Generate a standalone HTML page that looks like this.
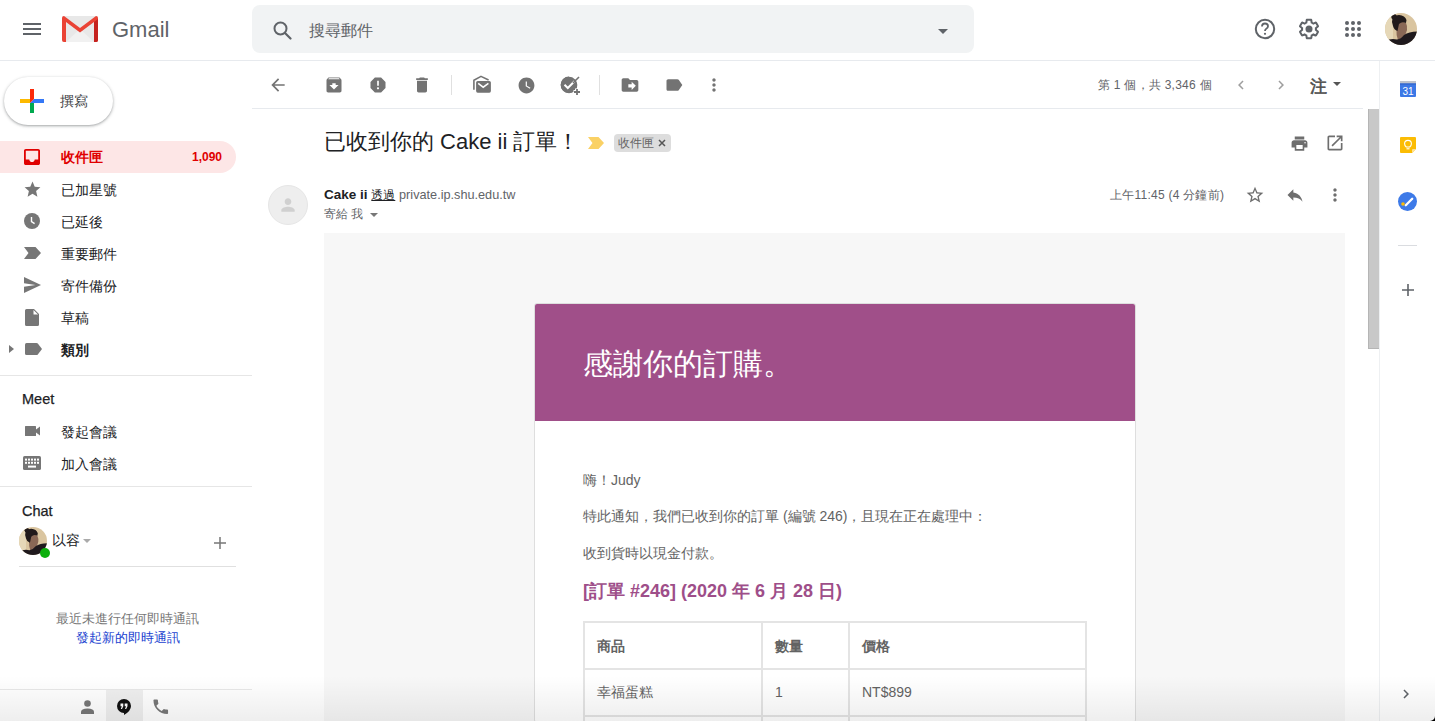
<!DOCTYPE html>
<html><head><meta charset="utf-8">
<style>
*{box-sizing:border-box;margin:0;padding:0}
html,body{width:1435px;height:721px;overflow:hidden;background:#fff}
body{font-family:"Liberation Sans",sans-serif;color:#202124;position:relative}
.a{position:absolute}
.t{position:absolute;white-space:nowrap;line-height:1}
svg{position:absolute;display:block}
.hl{position:absolute;height:1px;background:#e8eaed}
.ic{fill:#767676}
</style></head><body>

<!-- HEADER -->
<svg style="left:23px;top:23px" width="18" height="12" viewBox="0 0 18 12"><rect y="0" width="18" height="2" fill="#5f6368"/><rect y="5" width="18" height="2" fill="#5f6368"/><rect y="10" width="18" height="2" fill="#5f6368"/></svg>
<svg style="left:62px;top:16px" width="36" height="26" viewBox="0 0 36 26">
  <rect x="0" y="0" width="36" height="26" rx="2" fill="#e8e8e8"/>
  <path d="M4 26 L18 13 L32 26 Z" fill="#f1f1f1"/>
  <path d="M0 2 Q0 0 2 0 L18 12 L34 0 Q36 0 36 2 L36 24 Q36 26 34 26 L32 26 L32 6 L18 16.5 L4 6 L4 26 L2 26 Q0 26 0 24 Z" fill="#ea4335"/>
  <path d="M32 6 L36 3 L36 24 Q36 26 34 26 L32 26 Z" fill="#c5221f"/>
</svg>
<div class="t" style="left:112px;top:19px;font-size:22px;color:#5f6368">Gmail</div>

<div class="a" style="left:252px;top:5px;width:722px;height:48px;background:#f1f3f4;border-radius:8px"></div>
<svg style="left:273px;top:21px" width="19" height="19" viewBox="0 0 19 19"><circle cx="7.5" cy="7.5" r="6" fill="none" stroke="#5f6368" stroke-width="2"/><path d="M12 12 L17.5 17.5" stroke="#5f6368" stroke-width="2.2" stroke-linecap="round"/></svg>
<div class="t" style="left:309px;top:23px;font-size:16px;color:#5f6368">搜尋郵件</div>
<svg style="left:938px;top:29px" width="10" height="5" viewBox="0 0 10 5"><path d="M0 0 L10 0 L5 5 Z" fill="#5f6368"/></svg>

<svg style="left:1254px;top:18px" width="22" height="22" viewBox="0 0 22 22"><circle cx="11" cy="11" r="9.2" fill="none" stroke="#5f6368" stroke-width="2"/><path d="M8 8.5 Q8 5.5 11 5.5 Q14 5.5 14 8.3 Q14 10 12 11 Q11 11.6 11 13" fill="none" stroke="#5f6368" stroke-width="1.8"/><circle cx="11" cy="15.8" r="1.1" fill="#5f6368"/></svg>
<svg style="left:1297px;top:17px" width="24" height="24" viewBox="0 0 24 24"><path fill="#5f6368" d="M13.85 22.25h-3.7c-.74 0-1.36-.54-1.45-1.27l-.27-1.89c-.27-.14-.53-.29-.79-.46l-1.8.72c-.7.26-1.47-.03-1.81-.65L2.2 15.53c-.35-.66-.2-1.44.36-1.88l1.53-1.19c-.01-.15-.02-.3-.02-.46 0-.15.01-.31.02-.46l-1.52-1.19c-.59-.45-.74-1.26-.37-1.88l1.85-3.19c.34-.62 1.11-.9 1.79-.63l1.81.73c.26-.17.52-.32.78-.46l.27-1.91c.09-.7.71-1.25 1.44-1.25h3.7c.74 0 1.36.54 1.45 1.27l.27 1.89c.27.14.53.29.79.46l1.8-.72c.71-.26 1.48.03 1.82.65l1.84 3.18c.36.66.2 1.44-.36 1.88l-1.52 1.19c.01.15.02.3.02.46s-.01.31-.02.46l1.52 1.19c.56.45.72 1.23.37 1.86l-1.86 3.22c-.34.62-1.11.9-1.8.63l-1.8-.72c-.26.17-.52.32-.78.46l-.27 1.91c-.1.68-.72 1.22-1.46 1.22zm-3.23-2h2.76l.37-2.55.53-.22c.44-.18.88-.44 1.34-.78l.45-.34 2.38.96 1.38-2.4-2.03-1.58.07-.56c.03-.26.06-.51.06-.78s-.03-.53-.06-.78l-.07-.56 2.03-1.58-1.39-2.4-2.39.96-.45-.35c-.42-.32-.87-.58-1.33-.77l-.52-.22-.37-2.55h-2.76l-.37 2.55-.53.21c-.44.19-.88.44-1.34.79l-.45.33-2.38-.95-1.39 2.39 2.03 1.58-.07.56a7 7 0 0 0-.06.79c0 .26.02.53.06.78l.07.56-2.03 1.58 1.38 2.4 2.39-.96.45.35c.43.33.86.58 1.33.77l.53.22.38 2.55z"/><circle cx="12" cy="12" r="3.5" fill="#5f6368"/></svg>
<svg style="left:1345px;top:21px" width="16" height="16" viewBox="0 0 16 16" fill="#5f6368"><circle cx="2" cy="2" r="2"/><circle cx="8" cy="2" r="2"/><circle cx="14" cy="2" r="2"/><circle cx="2" cy="8" r="2"/><circle cx="8" cy="8" r="2"/><circle cx="14" cy="8" r="2"/><circle cx="2" cy="14" r="2"/><circle cx="8" cy="14" r="2"/><circle cx="14" cy="14" r="2"/></svg>
<svg style="left:1385px;top:13px" width="32" height="32" viewBox="0 0 32 32">
  <defs><clipPath id="av"><circle cx="16" cy="16" r="16"/></clipPath></defs><g clip-path="url(#av)"><rect width="32" height="32" fill="#dac5a0"/><path d="M0 0 H8 V32 H0 Z" fill="#e6d8b8"/><path d="M12.5 10 Q17 7.5 21 10 Q22.5 13 22 17 Q21 22 18 25 L13 27 Q11 22 11.5 16 Z" fill="#8a6856"/><path d="M7 9 Q7 2 14 2 Q20 2.5 21.5 7 L21 10 Q17 8 14 11 L12.5 18 Q9 17 8 13 Z" fill="#211a1b"/><circle cx="9" cy="3.8" r="2.7" fill="#211a1b"/><path d="M0 32 V28 Q6 25 12 26.5 Q16 26 19 22 Q24 18.5 32 18.5 V32 Z" fill="#1f191d"/></g>
</svg>
<div class="hl" style="left:0;top:60px;width:1435px;background:#e7eaee"></div>


<!-- SIDEBAR -->
<div class="a" style="left:4px;top:77px;width:109px;height:48px;border-radius:24px;background:#fff;box-shadow:0 1px 2px 0 rgba(60,64,67,.3),0 1px 3px 1px rgba(60,64,67,.15)"></div>
<svg style="left:20px;top:89px" width="24" height="24" viewBox="0 0 24 24"><path d="M0 10 H10 V14 H0 Z" fill="#fdb900"/><path d="M10 14 H14 V24 H10 Z" fill="#00a94f"/><path d="M14 10 H24 V14 H10 Z" fill="#3478f6"/><path d="M10 0 H14 V10 L10 14 Z" fill="#fb2a0a"/></svg>
<div class="t" style="left:60px;top:94px;font-size:14px;color:#3c4043">撰寫</div>

<div class="a" style="left:0;top:141px;width:236px;height:32px;background:#fde6e6;border-radius:0 16px 16px 0"></div>
<svg style="left:24px;top:149px" width="16" height="16" viewBox="0 0 16 16"><path fill="#e00000" d="M14.2 0H1.8C.8 0 0 .8 0 1.8v12.4C0 15.2.8 16 1.8 16h12.4c1 0 1.8-.8 1.8-1.8V1.8C16 .8 15.2 0 14.2 0zm0 10.5h-3.5c0 1.4-1.2 2.6-2.7 2.6s-2.7-1.2-2.7-2.6H1.8V1.8h12.4v8.7z"/></svg>
<div class="t" style="left:61px;top:150px;font-size:14px;color:#e00000;font-weight:bold">收件匣</div>
<div class="t" style="left:192px;top:151px;font-size:12px;color:#e00000;font-weight:bold">1,090</div>

<svg style="left:22.5px;top:179.5px" width="19" height="19" viewBox="0 0 24 24"><path class="ic" d="M12 17.27L18.18 21l-1.64-7.03L22 9.24l-7.19-.61L12 2 9.19 8.63 2 9.24l5.46 4.73L5.82 21z"/></svg>
<div class="t" style="left:61px;top:183px;font-size:14px">已加星號</div>
<svg style="left:24px;top:213px" width="16" height="16" viewBox="0 0 16 16"><circle cx="8" cy="8" r="8" fill="#767676"/><path d="M7.5 4 V8.6 L10.6 10.6" fill="none" stroke="#fff" stroke-width="1.4"/></svg>
<div class="t" style="left:61px;top:215px;font-size:14px">已延後</div>
<svg style="left:24px;top:247px" width="17" height="12" viewBox="0 0 17 12"><path class="ic" d="M0 0 H11.5 L17 6 L11.5 12 H0 L4.5 6 Z"/></svg>
<div class="t" style="left:61px;top:247px;font-size:14px">重要郵件</div>
<svg style="left:24px;top:277px" width="17" height="16" viewBox="0 0 17 16"><path class="ic" d="M0 16 L17 8 L0 0 L0 6.2 L11.5 8 L0 9.8 Z"/></svg>
<div class="t" style="left:61px;top:279px;font-size:14px">寄件備份</div>
<svg style="left:25px;top:309px" width="14" height="17" viewBox="0 0 14 17"><path class="ic" d="M1.5 0 H9 L14 5 V15.5 Q14 17 12.5 17 H1.5 Q0 17 0 15.5 V1.5 Q0 0 1.5 0 Z M8.5 1 V5.5 H13 Z"/></svg>
<div class="t" style="left:61px;top:311px;font-size:14px">草稿</div>
<svg style="left:9px;top:345px" width="5" height="8" viewBox="0 0 5 8"><path d="M0 0 L5 4 L0 8 Z" fill="#767676"/></svg>
<svg style="left:25px;top:343px" width="17" height="12" viewBox="0 0 17 12"><path class="ic" d="M1.5 0 H11.5 Q12.3 0 12.8 .6 L17 6 L12.8 11.4 Q12.3 12 11.5 12 H1.5 Q0 12 0 10.5 V1.5 Q0 0 1.5 0 Z"/></svg>
<div class="t" style="left:61px;top:343px;font-size:14px;font-weight:bold">類別</div>

<div class="hl" style="left:0;top:375px;width:252px;background:#e6e6e6"></div>
<div class="t" style="left:22px;top:392px;font-size:14.5px;color:#202124;-webkit-text-stroke:0.25px #202124">Meet</div>
<svg style="left:24.5px;top:426px" width="15.5" height="10" viewBox="0 0 15.5 10"><path class="ic" d="M.6 0 H10.4 Q11 0 11 .6 V3.6 L15.5 0 V10 L11 6.4 V9.4 Q11 10 10.4 10 H.6 Q0 10 0 9.4 V.6 Q0 0 .6 0 Z"/></svg>
<div class="t" style="left:61px;top:425px;font-size:14px">發起會議</div>
<svg style="left:23px;top:456px" width="18" height="14" viewBox="0 0 18 14"><rect width="18" height="14" rx="1.6" fill="#767676"/><g fill="#fff"><rect x="2" y="2.6" width="2" height="2"/><rect x="5" y="2.6" width="2" height="2"/><rect x="8" y="2.6" width="2" height="2"/><rect x="11" y="2.6" width="2" height="2"/><rect x="14" y="2.6" width="2" height="2"/><rect x="2" y="5.8" width="2" height="2"/><rect x="5" y="5.8" width="2" height="2"/><rect x="8" y="5.8" width="2" height="2"/><rect x="11" y="5.8" width="2" height="2"/><rect x="14" y="5.8" width="2" height="2"/><rect x="5" y="9.6" width="8" height="2"/></g></svg>
<div class="t" style="left:61px;top:457px;font-size:14px">加入會議</div>

<div class="hl" style="left:0;top:486px;width:252px;background:#e6e6e6"></div>
<div class="t" style="left:22px;top:504px;font-size:14.5px;color:#202124;-webkit-text-stroke:0.25px #202124">Chat</div>
<svg style="left:19px;top:527px" width="28" height="28" viewBox="0 0 32 32">
  <defs><clipPath id="av2"><circle cx="16" cy="16" r="16"/></clipPath></defs><g clip-path="url(#av2)"><rect width="32" height="32" fill="#dac5a0"/><path d="M0 0 H8 V32 H0 Z" fill="#e6d8b8"/><path d="M12.5 10 Q17 7.5 21 10 Q22.5 13 22 17 Q21 22 18 25 L13 27 Q11 22 11.5 16 Z" fill="#8a6856"/><path d="M7 9 Q7 2 14 2 Q20 2.5 21.5 7 L21 10 Q17 8 14 11 L12.5 18 Q9 17 8 13 Z" fill="#211a1b"/><circle cx="9" cy="3.8" r="2.7" fill="#211a1b"/><path d="M0 32 V28 Q6 25 12 26.5 Q16 26 19 22 Q24 18.5 32 18.5 V32 Z" fill="#1f191d"/></g>
</svg>
<div class="a" style="left:40px;top:548px;width:10px;height:10px;border-radius:50%;background:#0cb00c"></div>
<div class="t" style="left:52px;top:533px;font-size:14px">以容</div>
<svg style="left:83px;top:539px" width="8" height="4" viewBox="0 0 8 4"><path d="M0 0 H8 L4 4 Z" fill="#aaa"/></svg>
<svg style="left:214px;top:537px" width="12" height="12" viewBox="0 0 12 12"><path d="M6 0 V12 M0 6 H12" stroke="#777" stroke-width="1.5"/></svg>
<div class="hl" style="left:19px;top:566px;width:217px;background:#e0e0e0"></div>

<div class="t" style="left:0;width:255px;text-align:center;top:612px;font-size:13px;color:#777">最近未進行任何即時通訊</div>
<div class="t" style="left:0;width:255px;text-align:center;top:631px;font-size:13px;color:#1a3fd0">發起新的即時通訊</div>

<div class="hl" style="left:0;top:689px;width:252px;background:#e8e8e8"></div>
<div class="a" style="left:106px;top:690px;width:37px;height:31px;background:#efefef"></div>
<svg style="left:81px;top:700px" width="13" height="14" viewBox="0 0 13 14"><circle cx="6.5" cy="3.5" r="3.3" fill="#777"/><path d="M0 14 V12 Q0 8.5 6.5 8.5 Q13 8.5 13 12 V14 Z" fill="#777"/></svg>
<svg style="left:117px;top:699px" width="14" height="16" viewBox="0 0 14 16"><path d="M7 0 A7 7 0 0 0 7 14 L7 16 Q14 12 14 7 A7 7 0 0 0 7 0 Z" fill="#111"/><path d="M3.5 4.5 H6.3 V7.3 L5 10 H3.8 L4.8 7.3 H3.5 Z M7.7 4.5 H10.5 V7.3 L9.2 10 H8 L9 7.3 H7.7 Z" fill="#fff"/></svg>
<svg style="left:150.5px;top:697px" width="19.5" height="19.5" viewBox="0 0 24 24"><path fill="#777" d="M6.62 10.79c1.44 2.83 3.76 5.14 6.59 6.59l2.2-2.2c.27-.27.67-.36 1.02-.24 1.12.37 2.33.57 3.57.57.55 0 1 .45 1 1V20c0 .55-.45 1-1 1-9.39 0-17-7.61-17-17 0-.55.45-1 1-1h3.5c.55 0 1 .45 1 1 0 1.25.2 2.45.57 3.57.11.35.03.74-.25 1.02l-2.2 2.2z"/></svg>



<!-- MAIN -->
<svg style="left:268.0px;top:75.0px" width="20" height="20" viewBox="0 0 24 24"><path fill="#737373" d="M20 11H7.83l5.59-5.59L12 4l-8 8 8 8 1.41-1.41L7.83 13H20v-2z"/></svg>
<svg style="left:324.0px;top:75.0px" width="20" height="20" viewBox="0 0 24 24"><path fill="#737373" d="M20.54 5.23l-1.39-1.68C18.88 3.21 18.47 3 18 3H6c-.47 0-.88.21-1.16.55L3.46 5.23C3.17 5.57 3 6.02 3 6.5V19c0 1.1.9 2 2 2h14c1.1 0 2-.9 2-2V6.5c0-.48-.17-.93-.46-1.27zM12 17.5L6.5 12H10v-2h4v2h3.5L12 17.5zM5.12 5l.81-1h12l.94 1H5.12z"/></svg>
<svg style="left:368.0px;top:75.0px" width="20" height="20" viewBox="0 0 24 24"><path fill="#737373" d="M15.73 3H8.27L3 8.27v7.46L8.27 21h7.46L21 15.73V8.27L15.73 3zM12 17.3c-.72 0-1.3-.58-1.3-1.3 0-.72.58-1.3 1.3-1.3.72 0 1.3.58 1.3 1.3 0 .72-.58 1.3-1.3 1.3zm1-4.3h-2V7h2v6z"/></svg>
<svg style="left:412.0px;top:75.0px" width="20" height="20" viewBox="0 0 24 24"><path fill="#737373" d="M6 19c0 1.1.9 2 2 2h8c1.1 0 2-.9 2-2V7H6v12zM19 4h-3.5l-1-1h-5l-1 1H5v2h14V4z"/></svg>
<svg style="left:472px;top:75px" width="20" height="19" viewBox="0 0 20 19"><path d="M1.9 14.8 V5.2 L9 1.4 L16.6 5" fill="none" stroke="#737373" stroke-width="1.6" stroke-linejoin="round"/><rect x="4.1" y="6" width="14.8" height="11.7" rx="1.6" fill="#737373"/><path d="M6.2 8.4 L11.2 12.2 L16.4 8.4" fill="none" stroke="#fff" stroke-width="1.5"/></svg>
<svg style="left:516.5px;top:75.5px" width="19" height="19" viewBox="0 0 24 24"><path fill="#737373" d="M12 2C6.5 2 2 6.5 2 12s4.5 10 10 10 10-4.5 10-10S17.5 2 12 2zm4.2 14.2L11 13V7h1.5v5.2l4.5 2.7-.8 1.3z"/></svg>
<svg style="left:620.0px;top:75.0px" width="20" height="20" viewBox="0 0 24 24"><path fill="#737373" d="M20 6h-8l-2-2H4c-1.1 0-1.99.9-1.99 2L2 18c0 1.1.9 2 2 2h16c1.1 0 2-.9 2-2V8c0-1.1-.9-2-2-2zm-6 12v-3h-4v-4h4V8l5 5-5 5z"/></svg>
<svg style="left:664.0px;top:75.0px" width="20" height="20" viewBox="0 0 24 24"><path fill="#737373" d="M17.63 5.84C17.27 5.33 16.67 5 16 5L5 5.01C3.9 5.01 3 5.9 3 7v10c0 1.1.9 1.99 2 1.99L16 19c.67 0 1.27-.33 1.63-.84L22 12l-4.37-6.16z"/></svg>
<svg style="left:704.0px;top:75.0px" width="20" height="20" viewBox="0 0 24 24"><path fill="#737373" d="M12 8c1.1 0 2-.9 2-2s-.9-2-2-2-2 .9-2 2 .9 2 2 2zm0 2c-1.1 0-2 .9-2 2s.9 2 2 2 2-.9 2-2-.9-2-2-2zm0 6c-1.1 0-2 .9-2 2s.9 2 2 2 2-.9 2-2-.9-2-2-2z"/></svg>
<svg style="left:560px;top:75px" width="22" height="21" viewBox="0 0 22 21"><path fill="#737373" d="M9 1.5 A8.3 8.3 0 1 0 17.2 11 L15.3 11 A6.5 6.5 0 0 1 9 16.2 Z"/><circle cx="9" cy="10" r="8.3" fill="#737373"/><path d="M4.5 9.8 L7.8 13 L14.5 6.3" fill="none" stroke="#fff" stroke-width="2"/><path d="M13 8 L19 2" stroke="#737373" stroke-width="1.6"/><path d="M17 13.5 V20.5 M13.5 17 H20.5" stroke="#fff" stroke-width="4"/><path d="M17 14 V20 M14 17 H20" stroke="#737373" stroke-width="1.8"/></svg>
<div class="a" style="left:451px;top:75px;width:1px;height:20px;background:#e0e0e0"></div>
<div class="a" style="left:599px;top:75px;width:1px;height:20px;background:#e0e0e0"></div>
<div class="t" style="left:1098px;top:79px;font-size:12px;letter-spacing:0.25px;color:#5f6368">第 1 個，共 3,346 個</div>
<svg style="left:1232.0px;top:76.0px" width="18" height="18" viewBox="0 0 24 24"><path fill="#9e9e9e" d="M15.41 7.41L14 6l-6 6 6 6 1.41-1.41L10.83 12z"/></svg>
<svg style="left:1272.0px;top:76.0px" width="18" height="18" viewBox="0 0 24 24"><path fill="#9e9e9e" d="M10 6L8.59 7.41 13.17 12l-4.58 4.59L10 18l6-6z"/></svg>
<div class="t" style="left:1310px;top:78px;font-size:16.5px;color:#4d4d4d;-webkit-text-stroke:0.6px #4d4d4d">注</div>
<svg style="left:1333px;top:82px" width="8" height="4" viewBox="0 0 8 4"><path d="M0 0 H8 L4 4 Z" fill="#555"/></svg>
<div class="hl" style="left:252px;top:108px;width:1111px;background:#e7eaee"></div>
<div class="a" style="left:1379px;top:61px;width:1px;height:660px;background:#eef0f2"></div>
<div class="a" style="left:1368px;top:109px;width:11px;height:240px;background:#c8c8c8;border-left:1px solid #b5b5b5;border-bottom:1px solid #b5b5b5"></div>
<div class="t" style="left:324px;top:131px;font-size:22px;color:#202124">已收到你的 Cake ii 訂單！</div>
<svg style="left:588px;top:137px" width="16" height="12" viewBox="0 0 16 12"><path d="M0 0 H10.5 L16 6 L10.5 12 H0 L4.5 6 Z" fill="#fad165"/></svg>
<div class="a" style="left:614px;top:134px;width:57px;height:18px;background:#dddddd;border-radius:4px"></div>
<div class="t" style="left:618px;top:137px;font-size:12px;color:#666">收件匣</div>
<svg style="left:658px;top:139px" width="8" height="8" viewBox="0 0 8 8"><path d="M1 1 L7 7 M7 1 L1 7" stroke="#555" stroke-width="1.5"/></svg>
<svg style="left:1289.5px;top:133.5px" width="19" height="19" viewBox="0 0 24 24"><path fill="#6e6e6e" d="M19 8H5c-1.66 0-3 1.34-3 3v6h4v4h12v-4h4v-6c0-1.66-1.34-3-3-3zm-3 11H8v-5h8v5zm3-7c-.55 0-1-.45-1-1s.45-1 1-1 1 .45 1 1-.45 1-1 1zm-1-9H6v4h12V3z"/></svg>
<svg style="left:1325.0px;top:133.0px" width="20" height="20" viewBox="0 0 24 24"><path fill="#6e6e6e" d="M19 19H5V5h7V3H5c-1.11 0-2 .9-2 2v14c0 1.1.89 2 2 2h14c1.1 0 2-.9 2-2v-7h-2v7zM14 3v2h3.59l-9.83 9.83 1.41 1.41L19 6.41V10h2V3h-7z"/></svg>
<div class="a" style="left:268px;top:185px;width:40px;height:40px;border-radius:50%;background:#eeeeee;border:1px solid #e6e6e6"></div>
<svg style="left:278px;top:195px" width="20" height="20" viewBox="0 0 24 24"><path fill="#d0d0d0" d="M12 12c2.21 0 4-1.79 4-4s-1.79-4-4-4-4 1.79-4 4 1.79 4 4 4zm0 2c-2.67 0-8 1.34-8 4v2h16v-2c0-2.66-5.33-4-8-4z"/></svg>
<div class="t" style="left:324px;top:188px;font-size:13.5px;color:#202124"><b>Cake ii</b> <span style="text-decoration:underline;font-size:12px">透過</span> <span style="color:#5f6368;font-size:12.7px">private.ip.shu.edu.tw</span></div>
<div class="t" style="left:324px;top:208px;font-size:12px;color:#5f6368">寄給 我</div>
<svg style="left:370px;top:213px" width="8" height="4" viewBox="0 0 8 4"><path d="M0 0 H8 L4 4 Z" fill="#777"/></svg>
<div class="t" style="left:1110px;top:189px;font-size:12px;letter-spacing:0.25px;color:#5f6368">上午11:45 (4 分鐘前)</div>
<svg style="left:1245.0px;top:185.0px" width="20" height="20" viewBox="0 0 24 24"><path fill="#6e6e6e" d="M22 9.24l-7.19-.62L12 2 9.19 8.63 2 9.24l5.46 4.73L5.82 21 12 17.27 18.18 21l-1.63-7.03L22 9.24zM12 15.4l-3.76 2.27 1-4.28-3.32-2.88 4.38-.38L12 6.1l1.71 4.04 4.38.38-3.32 2.88 1 4.28L12 15.4z"/></svg>
<svg style="left:1285.0px;top:185.0px" width="20" height="20" viewBox="0 0 24 24"><path fill="#6e6e6e" d="M10 9V5l-7 7 7 7v-4.1c5 0 8.5 1.6 11 5.1-1-5-4-10-11-11z"/></svg>
<svg style="left:1325.0px;top:185.0px" width="20" height="20" viewBox="0 0 24 24"><path fill="#6e6e6e" d="M12 8c1.1 0 2-.9 2-2s-.9-2-2-2-2 .9-2 2 .9 2 2 2zm0 2c-1.1 0-2 .9-2 2s.9 2 2 2 2-.9 2-2-.9-2-2-2zm0 6c-1.1 0-2 .9-2 2s.9 2 2 2 2-.9 2-2-.9-2-2-2z"/></svg>
<div class="a" style="left:324px;top:233px;width:1021px;height:488px;background:#f7f7f7"></div>
<div class="a" style="left:534px;top:303px;width:602px;height:420px;background:#fff;border:1px solid #dedede;border-radius:3px;overflow:hidden"><div class="a" style="left:0;top:0;width:600px;height:117px;background:#a04f89"></div></div>
<div class="t" style="left:583px;top:349px;font-size:30px;color:#fff">感謝你的訂購。</div>
<div class="t" style="left:583px;top:473px;font-size:14px;color:#636363">嗨！Judy</div>
<div class="t" style="left:583px;top:509px;font-size:14px;color:#636363">特此通知，我們已收到你的訂單 (編號 246)，且現在正在處理中：</div>
<div class="t" style="left:583px;top:546px;font-size:14px;color:#636363">收到貨時以現金付款。</div>
<div class="t" style="left:583px;top:582px;font-size:18px;color:#9e4e89;font-weight:bold">[訂單 #246] (2020 年 6 月 28 日)</div>
<div class="a" style="left:583px;top:621px;width:504px;height:110px;border:2px solid #e4e4e4;border-bottom:none"></div>
<div class="a" style="left:761px;top:621px;width:2px;height:100px;background:#e4e4e4"></div>
<div class="a" style="left:848px;top:621px;width:2px;height:100px;background:#e4e4e4"></div>
<div class="a" style="left:583px;top:668px;width:504px;height:2px;background:#e4e4e4"></div>
<div class="a" style="left:583px;top:715px;width:504px;height:2px;background:#e4e4e4"></div>
<div class="t" style="left:597px;top:639px;font-size:14px;color:#636363;font-weight:bold">商品</div>
<div class="t" style="left:775px;top:639px;font-size:14px;color:#636363;font-weight:bold">數量</div>
<div class="t" style="left:862px;top:639px;font-size:14px;color:#636363;font-weight:bold">價格</div>
<div class="t" style="left:597px;top:685px;font-size:14px;color:#636363">幸福蛋糕</div>
<div class="t" style="left:775px;top:685px;font-size:14px;color:#636363">1</div>
<div class="t" style="left:862px;top:685px;font-size:14px;color:#636363">NT$899</div>
<svg style="left:1400px;top:81px" width="16" height="16" viewBox="0 0 16 16"><rect x="0" y="0" width="16" height="16" rx="1" fill="#3c78e6"/><rect x="0" y="0" width="16" height="2.5" fill="#bfc3cc"/><rect x="0" y="2.5" width="16" height="1" fill="#2f5fc4"/><text x="8" y="14" font-size="10" fill="#fff" text-anchor="middle" font-family="Liberation Sans">31</text></svg>
<svg style="left:1400px;top:137px" width="16" height="16" viewBox="0 0 16 16"><path d="M1 0 H15 Q16 0 16 1 V12 L12 16 H1 Q0 16 0 15 V1 Q0 0 1 0 Z" fill="#fbbc04"/><path d="M12 16 L16 12 H13 Q12 12 12 13 Z" fill="#fde293"/><path d="M6.3 10 Q4.6 8.8 4.6 6.8 A3.4 3.4 0 0 1 11.4 6.8 Q11.4 8.8 9.7 10 Z" fill="none" stroke="#fff" stroke-width="1.1"/><path d="M6.5 11.8 H9.5" stroke="#fff" stroke-width="1.1"/></svg>
<svg style="left:1398px;top:192px" width="19" height="19" viewBox="0 0 19 19"><circle cx="9.5" cy="9.5" r="9.5" fill="#3d7ae8"/><path d="M7.8 13.2 L14.2 6.8" stroke="#fff" stroke-width="2.3" stroke-linecap="round"/><circle cx="5" cy="12" r="1.8" fill="#fbbc04"/></svg>
<div class="hl" style="left:1398px;top:245px;width:19px;background:#dadce0"></div>
<svg style="left:1402px;top:284px" width="12" height="12" viewBox="0 0 12 12"><path d="M6 0 V12 M0 6 H12" stroke="#5f6368" stroke-width="1.6"/></svg>
<svg style="left:1397px;top:685px" width="18" height="18" viewBox="0 0 24 24"><path fill="#5f6368" d="M10 6L8.59 7.41 13.17 12l-4.58 4.59L10 18l6-6z"/></svg>
<div class="a" style="left:0;top:676px;width:1435px;height:45px;background:linear-gradient(to bottom,rgba(0,0,0,0),rgba(0,0,0,.065))"></div>


<svg style="left:1430px;top:716px" width="5" height="5" viewBox="0 0 5 5"><path d="M5 0 V5 H0 A5 5 0 0 0 5 0 Z" fill="#000"/></svg>
</body></html>
